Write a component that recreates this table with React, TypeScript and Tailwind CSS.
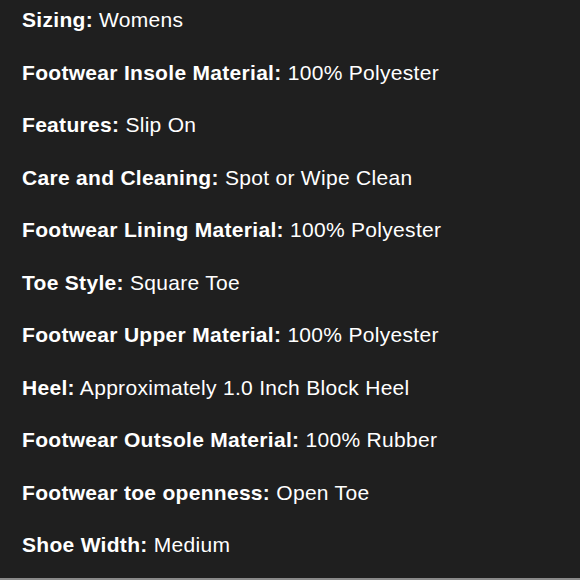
const rows: [string, string][] = [
  ["Sizing:", "Womens"],
  ["Footwear Insole Material:", "100% Polyester"],
  ["Features:", "Slip On"],
  ["Care and Cleaning:", "Spot or Wipe Clean"],
  ["Footwear Lining Material:", "100% Polyester"],
  ["Toe Style:", "Square Toe"],
  ["Footwear Upper Material:", "100% Polyester"],
  ["Heel:", "Approximately 1.0 Inch Block Heel"],
  ["Footwear Outsole Material:", "100% Rubber"],
  ["Footwear toe openness:", "Open Toe"],
  ["Shoe Width:", "Medium"],
];

export default function App() {
  return (
    <div
      className="w-[580px] h-[580px] bg-[#1f1f1f] flex flex-col overflow-hidden"
      style={{ fontFamily: '"Liberation Sans", Arial, sans-serif' }}
    >
      <div className="flex-1 flex flex-col gap-[28.5px] pt-[8px] pl-[22px] text-[21px] leading-[24px] tracking-[0.3px] text-white">
        {rows.map(([k, v]) => (
          <div key={k} className="whitespace-nowrap">
            <span className="font-bold">{k}</span> {v}
          </div>
        ))}
      </div>
      <div className="h-[2px] bg-[#8a8a8a]" />
    </div>
  );
}
